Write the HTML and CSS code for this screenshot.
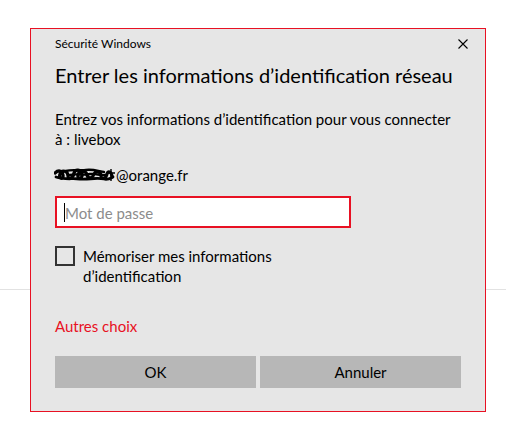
FILE: index.html
```html
<!DOCTYPE html>
<html lang="fr">
<head>
<meta charset="utf-8">
<title>Sécurité Windows</title>
<link rel="stylesheet" href="styles.css">
</head>
<body>
<div class="dialog">
  <div class="topbar">
    <span class="app-name">Sécurité Windows</span>
    <svg class="close" width="10" height="10" viewBox="0 0 10 10"><path d="M0.5 0.5 L9.5 9.5 M9.5 0.5 L0.5 9.5" stroke="#000" stroke-width="1.1" fill="none"/></svg>
  </div>
  <h1 class="title">Entrer les informations d’identification réseau</h1>
  <p class="desc">Entrez vos informations d’identification pour vous connecter<br>à : livebox</p>
  <div class="account">
    <svg class="scribble" width="62" height="16" viewBox="0 0 62 16">
      <path d="M1 6 C4 3 8 3 9 8 C10 13 4 12 6 7 C8 2 14 4 14 9 C14 13 19 12 20 6 C21 2 27 2 28 7 C29 12 23 13 24 8 C25 3 32 3 33 8 C34 12 38 12 40 7 C42 3 47 4 47 9 C47 13 52 12 53 7 C54 4 57 4 58 9" stroke="#000" stroke-width="3.2" fill="none" stroke-linecap="round"/>
      <path d="M2 10 C10 13 18 11 26 12 C34 13 42 10 50 12 C54 13 57 11 59 10" stroke="#000" stroke-width="2.8" fill="none" stroke-linecap="round"/>
      <path d="M12 4 C18 2 26 4 32 3 C38 2 44 4 50 5" stroke="#000" stroke-width="2.4" fill="none" stroke-linecap="round"/>
      <path d="M16 8 C22 6 30 9 36 7 C42 6 46 9 52 8" stroke="#000" stroke-width="2.4" fill="none" stroke-linecap="round"/>
      <path d="M57 2 L57 14 M54 6 L61 6" stroke="#000" stroke-width="1.4" fill="none"/>
    </svg><span>@orange.fr</span>
  </div>
  <div class="field">
    <input class="password" type="password" placeholder="Mot de passe">
    <span class="caret"></span>
  </div>
  <label class="remember">
    <span class="box"></span>
    <span class="remember-text">Mémoriser mes informations<br>d’identification</span>
  </label>
  <a class="more">Autres choix</a>
  <div class="buttons">
    <button class="btn">OK</button>
    <button class="btn">Annuler</button>
  </div>
</div>
</body>
</html>
```
FILE: styles.css
```css
html {
  background: #fff linear-gradient(to bottom, transparent 289px, #e2e2e2 289px, #e2e2e2 290px, transparent 290px) no-repeat;
  background-size: 100% 434px;
  height: 100%;
}
body {
  margin: 0;
  font-family: Lato, "Noto Sans", sans-serif;
  color: #000;
}
.dialog {
  box-sizing: border-box;
  margin: 28px 0 0 30px;
  width: 456px;
  height: 384px;
  border: 1px solid #e81123;
  background: #e6e6e6;
  padding: 7px 24px 0 24px;
  display: flex;
  flex-direction: column;
}
.topbar {
  display: flex;
  justify-content: space-between;
  align-items: center;
  height: 16px;
  margin-right: -7px;
}
.app-name {
  font-size: 12px;
  line-height: 16px;
}
.close {
  display: block;
}
.title {
  margin: 9px 0 0 0;
  font-size: 20px;
  line-height: 28px;
  font-weight: normal;
  white-space: nowrap;
}
.desc {
  margin: 20px 0 0 0;
  font-size: 15px;
  line-height: 20px;
  white-space: nowrap;
}
.account {
  margin-top: 16px;
  font-size: 15px;
  line-height: 20px;
  display: flex;
  align-items: center;
}
.scribble {
  display: block;
  margin-left: -1px;
}
.field {
  position: relative;
  margin-top: 11px;
  width: 296px;
  height: 32px;
}
.password {
  box-sizing: border-box;
  width: 296px;
  height: 32px;
  border: 2px solid #e81123;
  background: #fff;
  padding: 2px 8px 0 8px;
  font-family: inherit;
  font-size: 15px;
  outline: none;
  margin: 0;
}
.password::placeholder {
  color: #8c8c8c;
}
.caret {
  position: absolute;
  left: 9px;
  top: 7px;
  width: 1px;
  height: 19px;
  background: #000;
}
.remember {
  margin-top: 18px;
  display: flex;
  align-items: flex-start;
  gap: 8px;
}
.box {
  box-sizing: border-box;
  width: 20px;
  height: 20px;
  border: 2px solid #333;
  flex: none;
}
.remember-text {
  font-size: 15px;
  line-height: 20px;
}
.more {
  margin-top: 30px;
  font-size: 15px;
  line-height: 20px;
  color: #e81123;
  align-self: flex-start;
}
.buttons {
  margin-top: 20px;
  display: grid;
  grid-template-columns: 1fr 1fr;
  gap: 4px;
}
.btn {
  height: 32px;
  border: none;
  background: #b7b7b7;
  font-family: inherit;
  font-size: 15px;
  color: #000;
  padding: 0;
  margin: 0;
}
```
